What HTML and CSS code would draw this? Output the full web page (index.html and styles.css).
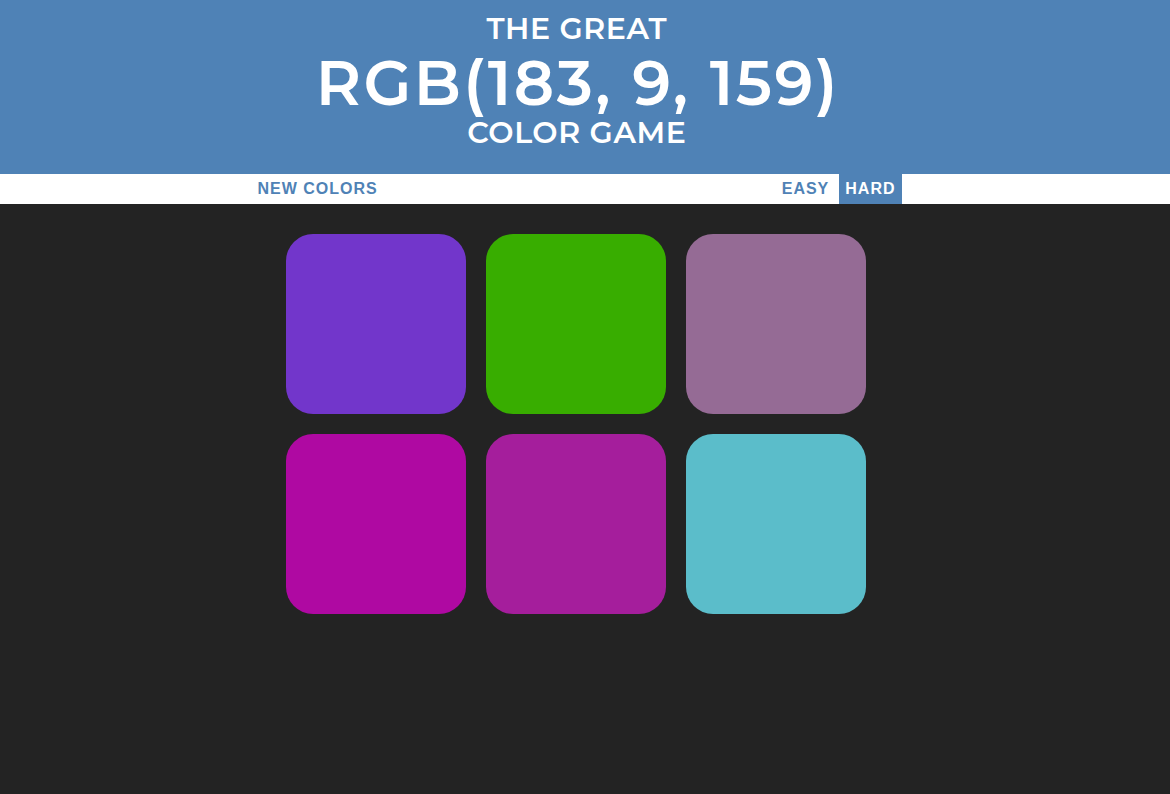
FILE: index.html
```html
<!DOCTYPE html>
<html lang="en">
<head>
<meta charset="utf-8">
<title>Color Game</title>
<link rel="stylesheet" href="styles.css">
</head>
<body>
  <header class="header">
    <h1 class="title">
      <span class="title-line">The Great</span>
      <span class="title-rgb">RGB(183, 9, 159)</span>
      <span class="title-line">Color Game</span>
    </h1>
  </header>
  <nav class="stripe">
    <div class="stripe-row">
      <button class="btn">New Colors</button>
      <div class="mode-group">
        <button class="btn">Easy</button>
        <button class="btn btn-selected">Hard</button>
      </div>
    </div>
  </nav>
  <main class="board">
    <div class="grid">
      <div class="square sq-1"></div>
      <div class="square sq-2"></div>
      <div class="square sq-3"></div>
      <div class="square sq-4"></div>
      <div class="square sq-5"></div>
      <div class="square sq-6"></div>
    </div>
  </main>
</body>
</html>
```
FILE: styles.css
```css
html, body {
  margin: 0;
  padding: 0;
}
body {
  background: #232323;
  min-height: 794px;
  font-family: "Liberation Sans", Arial, sans-serif;
}
.header {
  background: #4f82b6;
  color: #ffffff;
  padding-right: 17px;
}
.title {
  margin: 0;
  padding: 12px 0 25px;
  text-align: center;
  text-transform: uppercase;
  font-family: Montserrat, "DejaVu Sans", sans-serif;
  font-weight: 600;
}
.title-line {
  display: block;
  font-size: 30px;
  line-height: 33px;
  letter-spacing: 0.6px;
  padding-left: 0.6px;
}
.title-rgb {
  display: block;
  font-size: 62px;
  line-height: 66px;
  padding-top: 5px;
  letter-spacing: 2.4px;
  padding-left: 2.4px;
}
.stripe {
  background: #ffffff;
  height: 30px;
  padding-right: 17px;
}
.stripe-row {
  width: 650px;
  height: 30px;
  margin: 0 auto;
  display: flex;
  justify-content: space-between;
}
.mode-group {
  display: flex;
  gap: 4px;
  height: 30px;
}
.btn {
  border: none;
  background: none;
  margin: 0;
  padding: 0 6px;
  height: 30px;
  font-family: "Liberation Sans", Arial, sans-serif;
  font-size: 16px;
  font-weight: 700;
  letter-spacing: 1px;
  text-transform: uppercase;
  color: #4f82b6;
  cursor: pointer;
}
.btn-selected {
  background: #4f82b6;
  color: #ffffff;
}
.board {
  padding-right: 18px;
}
.grid {
  width: 580px;
  margin: 30px auto 0;
  display: grid;
  grid-template-columns: repeat(3, 180px);
  gap: 20px;
}
.square {
  height: 180px;
  border-radius: 15%;
}
.sq-1 { background: #7236cb; }
.sq-2 { background: #38ad00; }
.sq-3 { background: #956b95; }
.sq-4 { background: rgb(175, 9, 162); }
.sq-5 { background: #a51e9c; }
.sq-6 { background: #5bbdca; }
```
